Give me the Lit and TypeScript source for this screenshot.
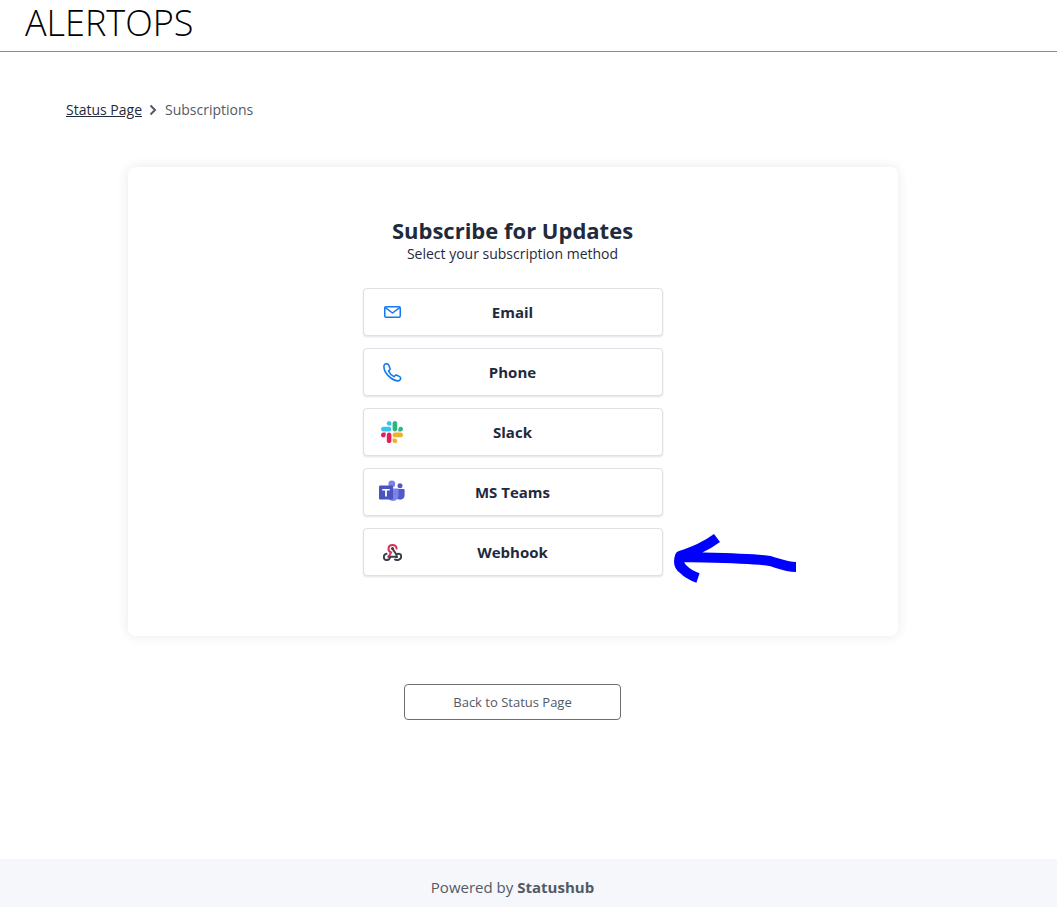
import { LitElement, html, css, svg } from "lit";
import { customElement } from "lit/decorators.js";

const email = html`<svg class="ico" width="17" height="12" viewBox="0 0 17 12" fill="none" stroke="#1478ee" stroke-width="1.5" stroke-linejoin="round"><rect x=".75" y=".75" width="15.5" height="10.5" rx="1.2"/><path d="M1 1.4 8.500 7 16 1.400"/></svg>`;
const phone = html`<svg class="ico" width="19" height="19" viewBox="0 0 19 19" fill="none" stroke="#1478ee" stroke-width="1.6" stroke-linejoin="round"><path d="M4 .9C2.800.6 1.400 1.200 1 2.600.6 6 2.500 9.800 5.200 12.600c2.800 2.900 6.300 5 9.400 5.300 1.400.1 2.600-.9 3-2.300.2-.8-.2-1.600-1-2L14 12.300c-.8-.4-1.600-.2-2.100.4l-.9.900C8.600 12.400 6.600 10.400 5.500 8l1-1c.6-.6.700-1.300.4-2L5.800 2.200C5.500 1.500 4.800 1.100 4 .9Z"/></svg>`;
const slack = html`<svg class="ico" width="22" height="22" viewBox="0 0 122.8 122.8"><path d="M25.8 77.6c0 7.1-5.8 12.9-12.9 12.9S0 84.7 0 77.6s5.8-12.9 12.9-12.9h12.9v12.9z" fill="#e01e5a"/><path d="M32.3 77.6c0-7.1 5.8-12.9 12.9-12.9s12.9 5.8 12.9 12.9v32.3c0 7.1-5.8 12.9-12.9 12.9s-12.9-5.8-12.9-12.9V77.6z" fill="#e01e5a"/><path d="M45.2 25.8c-7.1 0-12.9-5.8-12.9-12.9S38.1 0 45.2 0s12.9 5.8 12.9 12.9v12.9H45.2z" fill="#36c5f0"/><path d="M45.2 32.3c7.1 0 12.9 5.8 12.9 12.9s-5.8 12.9-12.9 12.9H12.9C5.8 58.1 0 52.3 0 45.2s5.8-12.9 12.9-12.9h32.3z" fill="#36c5f0"/><path d="M97 45.2c0-7.1 5.8-12.9 12.9-12.9s12.9 5.8 12.9 12.9-5.8 12.9-12.9 12.9H97V45.2z" fill="#2eb67d"/><path d="M90.5 45.2c0 7.1-5.8 12.9-12.9 12.9s-12.9-5.8-12.9-12.9V12.9C64.7 5.8 70.5 0 77.6 0s12.9 5.8 12.9 12.9v32.3z" fill="#2eb67d"/><path d="M77.6 97c7.1 0 12.9 5.8 12.9 12.9s-5.8 12.9-12.9 12.9-12.9-5.8-12.9-12.9V97h12.9z" fill="#ecb22e"/><path d="M77.6 90.5c-7.1 0-12.9-5.8-12.9-12.9s5.8-12.9 12.9-12.9h32.3c7.1 0 12.9 5.8 12.9 12.9s-5.8 12.9-12.9 12.9H77.6z" fill="#ecb22e"/></svg>`;
const teams = html`<svg class="ico" width="26" height="24" viewBox="0 0 26 24"><circle cx="21" cy="5.700" r="2.500" fill="#5059c9"/><path d="M15.500 9h8.900c.7 0 1.200.5 1.200 1.200v5.400c0 2.500-2 4.100-4.300 4.100-3 0-5.800-1.600-5.800-4.100V9Z" fill="#5059c9"/><circle cx="12.800" cy="4" r="3.400" fill="#7b83eb"/><path d="M8 8.500h10.500c.6 0 1.100.5 1.100 1.100v6c0 3.100-2.500 5.400-5.600 5.400-3.300 0-6-2.300-6-5.400V8.500Z" fill="#7b83eb"/><rect x="0" y="5.500" width="14" height="14" rx="1.200" fill="#4b53bc"/><path d="M3.200 8.900h7.600v1.500H7.900v6H6.100v-6H3.200z" fill="#fff"/></svg>`;
const webhook = html`<svg class="ico" width="19" height="17" viewBox="0 0 19 17" fill="none" stroke-width="2" stroke-linecap="round"><path d="M5.800 12.600 8.200 8.400C4.300 7.200 4.600 1 9.500 1c2.500 0 4 1.800 4.100 3.600" stroke="#d8315b"/><circle cx="5.800" cy="12.600" r="1.500" fill="#d8315b"/><path d="M9.500 4.600 13.500 10.700C15.500 8.600 18.200 10 18.200 12.500c0 3-3.700 4.500-6.200 3" stroke="#39424c"/><circle cx="9.500" cy="4.600" r="1.500" fill="#39424c"/><path d="M13.500 12.700H7.300C6.900 15 5.200 16.100 3.700 16.100 1.700 16.100.8 14.300.8 12.900c0-1.700 1.200-2.800 2.700-3.100" stroke="#39424c"/><circle cx="13.500" cy="12.700" r="1.500" fill="#39424c"/></svg>`;

const rows = [
  { label: "Email", icon: email },
  { label: "Phone", icon: phone },
  { label: "Slack", icon: slack },
  { label: "MS Teams", icon: teams },
  { label: "Webhook", icon: webhook },
];

@customElement("app-root")
export class AppRoot extends LitElement {
  static styles = css`
    :host {
      display: flex;
      flex-direction: column;
      min-height: 100vh;
      position: relative;
      font-family: "Open Sans", sans-serif;
      color: #1f2a3c;
      background: #fff;
    }
    header {
      height: 51px;
      border-bottom: 1px solid #8c8c8c;
      padding-left: 25px;
    }
    .logo {
      font-size: 36px;
      font-weight: 300;
      line-height: 46px;
      color: #000;
    }
    .crumbs {
      display: flex;
      align-items: center;
      margin: 48px 0 0 66px;
      font-size: 14px;
      line-height: 20px;
      color: #525a66;
    }
    .crumbs a {
      color: #1f2a3c;
      text-decoration: underline;
    }
    .crumbs svg {
      margin: 0 8px 0 7px;
      width: 8px;
      height: 12px;
    }
    main {
      flex: 1;
      display: flex;
      flex-direction: column;
      align-items: center;
      padding-right: 32px;
    }
    .card {
      box-sizing: border-box;
      width: 770px;
      height: 469px;
      margin-top: 47px;
      background: #fff;
      border-radius: 8px;
      box-shadow: 0 0 12px rgba(30, 40, 60, 0.1);
      padding-top: 47px;
      display: flex;
      flex-direction: column;
      align-items: center;
    }
    h1 {
      margin: 0;
      font-size: 22px;
      font-weight: 700;
      line-height: 32px;
    }
    .sub {
      font-size: 14px;
      line-height: 18px;
      margin-top: -1px;
    }
    .list {
      display: flex;
      flex-direction: column;
      gap: 12px;
      margin-top: 25px;
    }
    .opt {
      position: relative;
      box-sizing: border-box;
      width: 300px;
      height: 48px;
      border: 1px solid #dfe1e6;
      border-radius: 4px;
      box-shadow: 0 1px 2px rgba(40, 50, 90, 0.14);
      background: #fff;
      display: flex;
      align-items: center;
      justify-content: center;
      font-weight: 700;
      font-size: 15px;
    }
    .icon-slot {
      position: absolute;
      left: 0;
      top: 0;
      bottom: 0;
      width: 57px;
      display: flex;
      align-items: center;
      justify-content: center;
    }
    .ico {
      display: block;
      flex: none;
    }
    .back {
      box-sizing: border-box;
      width: 217px;
      height: 36px;
      margin-top: 48px;
      border: 1px solid #6e6e6e;
      border-radius: 4px;
      display: flex;
      align-items: center;
      justify-content: center;
      font-size: 13px;
      color: #525a66;
    }
    footer {
      box-sizing: border-box;
      height: 48px;
      background: #f5f7fb;
      padding: 7px 32px 0 0;
      display: flex;
      align-items: center;
      justify-content: center;
      font-size: 15px;
      color: #525a66;
    }
    footer b {
      margin-left: 4px;
    }
    .arrow {
      position: absolute;
      left: 660px;
      top: 520px;
      width: 150px;
      height: 80px;
      pointer-events: none;
    }
  `;

  render() {
    return html`
      <header><div class="logo">ALERTOPS</div></header>
      <div class="crumbs">
        <a>Status Page</a>
        <svg viewBox="0 0 8 12" fill="none" stroke="#525a66" stroke-width="2"><path d="M1.500 1.500 6 6l-4.500 4.500"/></svg>
        <span>Subscriptions</span>
      </div>
      <main>
        <div class="card">
          <h1>Subscribe for Updates</h1>
          <div class="sub">Select your subscription method</div>
          <div class="list">
            ${rows.map(
              (r) => html`<div class="opt"><span class="icon-slot">${r.icon}</span>${r.label}</div>`
            )}
          </div>
        </div>
        <div class="back">Back to Status Page</div>
      </main>
      <footer>Powered by <b>Statushub</b></footer>
      <svg class="arrow" viewBox="0 0 150 80" fill="none" stroke="#0000ff" stroke-width="10" stroke-linejoin="round">
        ${svg`<path d="M136 47 C126 47 120 44 110 41 C90 38 60 38 22 37 M57 18 C45 27 34 31 20 36 C18 42 19 46 23 49 C27 53 32 56 38 58"/>`}
      </svg>
    `;
  }
}
